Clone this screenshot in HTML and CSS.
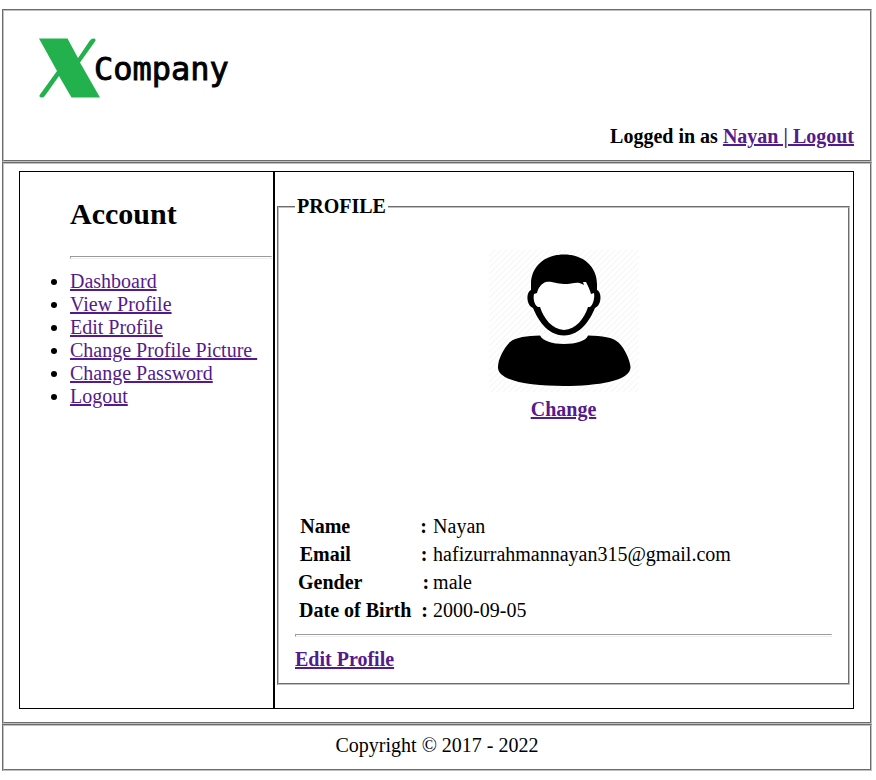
FILE: index.html
```
<!DOCTYPE html>
<html lang="en">
<head>
<meta charset="utf-8">
<title>Profile - XCompany</title>
<link rel="stylesheet" href="styles.css">
</head>
<body>
<header class="box header">
  <svg class="logo" width="200" height="68" viewBox="0 0 200 68" role="img" aria-label="XCompany">
    <path class="logo-mark" d="M0 4.500H28.500L39 24L50.500 7Q52 4.500 54 4.500H55Q57.500 5 56 7.500L41 28.500L61 63.500H32.500L20 42L6.500 61Q5 63.500 3 63.500H2Q-0.500 63 1 60.500L18 37Z"/>
    <text class="logo-text" x="55" y="46">Company</text>
  </svg>
  <p class="session">Logged in as <a href="#">Nayan | Logout</a></p>
</header>

<main class="box main">
  <nav class="panel sidebar">
    <h2>Account</h2>
    <hr>
    <ul>
      <li><a href="#">Dashboard</a></li>
      <li><a href="#">View Profile</a></li>
      <li><a href="#">Edit Profile</a></li>
      <li><a href="#">Change Profile Picture&nbsp;</a></li>
      <li><a href="#">Change Password</a></li>
      <li><a href="#">Logout</a></li>
    </ul>
  </nav>
  <section class="panel content">
    <fieldset>
      <legend>PROFILE</legend>
      <div class="picture">
        <svg width="150" height="142" viewBox="0 0 150 142" role="img" aria-label="Profile picture">
          <defs>
            <pattern id="stripes" width="6" height="6" patternUnits="userSpaceOnUse">
              <path d="M-1 1L1 -1M0 6L6 0M5 7L7 5" stroke="#f6f6f6" stroke-width="1.200"/>
            </pattern>
          </defs>
          <rect width="150" height="142" fill="url(#stripes)"/>
          <path d="M75 4.500C55 4.500 42 17 42 34V40C37 42 37 55 44 58C49 70 58 85 75 85.500C92 85 101 70 106 58C113 55 113 42 108 40V34C108 17 95 4.500 75 4.500Z"/>
          <path class="face" d="M48 43C49 38 53 33 57 32C63 31 67 34 75 34C83 34 88 31 93 34L95 35L94 32L97 32C99 36 101 40 102 44L105 43C106 48 104 55 101 57H99C95 69 87 79 75 80C63 79 55 69 51 57H49C45 55 44 48 45 44Z"/>
          <path d="M51 85.500C54 91 63 94 75 94C87 94 97 91 99 85.500C113 86 124 87 130 93C136 99 141 110 141.500 117C142 131 109 136 75 136C41 136 8 131 9 117C9 109 15 98 21 92C27 87 38 86 51 85.500Z"/>
        </svg>
        <a class="strong" href="#">Change</a>
      </div>
      <table>
        <tr><th scope="row">Name&nbsp;&nbsp;&nbsp;&nbsp;&nbsp;&nbsp;&nbsp;&nbsp;&nbsp;&nbsp;&nbsp;&nbsp;&nbsp;&nbsp;:</th><td>Nayan</td></tr>
        <tr><th scope="row">Email&nbsp;&nbsp;&nbsp;&nbsp;&nbsp;&nbsp;&nbsp;&nbsp;&nbsp;&nbsp;&nbsp;&nbsp;&nbsp;&nbsp;:</th><td>hafizurrahmannayan315@gmail.com</td></tr>
        <tr><th scope="row">Gender&nbsp;&nbsp;&nbsp;&nbsp;&nbsp;&nbsp;&nbsp;&nbsp;&nbsp;&nbsp;&nbsp;&nbsp;:</th><td>male</td></tr>
        <tr><th scope="row">Date of Birth&nbsp;&nbsp;:</th><td>2000-09-05</td></tr>
      </table>
      <hr>
      <a class="strong" href="#">Edit Profile</a>
    </fieldset>
  </section>
</main>

<footer class="box footer">Copyright © 2017 - 2022</footer>
</body>
</html>
```
FILE: styles.css
```
body {
  margin: 9px 4px 9px 2px;
  background: #fff;
  color: #000;
  font-family: "Liberation Serif", "Times New Roman", serif;
  font-size: 20px;
  line-height: 23px;
}

a {
  color: #551a8b;
  text-decoration-thickness: 2px;
}

.strong {
  font-weight: bold;
}

.box,
fieldset {
  border: 2px groove rgb(192, 192, 192);
}

hr {
  height: 1px;
  margin: 8px 0 11px;
  border: 1px solid;
  border-color: #9a9a9a #eee #eee #9a9a9a;
}

.header {
  padding: 23px 16px 12px 35px;
}

.logo {
  display: block;
}

.logo-mark {
  fill: #22b14c;
}

.logo-text {
  font-family: "DejaVu Sans Mono", monospace;
  font-size: 32px;
  stroke: #000;
  stroke-width: 0.9px;
}

.session {
  margin: 23px 0 0;
  font-weight: bold;
  text-align: right;
}

.main {
  display: grid;
  grid-template-columns: 255px 1fr;
  padding: 7px 16px 13px 15px;
}

.panel {
  border: 1px solid #000;
}

.sidebar {
  padding: 24px 1px 0 50px;
}

h2 {
  margin: 0 0 25px;
  font-size: 30px;
  line-height: 35px;
}

ul {
  margin: 0;
  padding: 0;
}

.content {
  padding: 23px 3px 23px 2px;
}

fieldset {
  margin: 0;
  padding: 32px 16px 12px;
}

legend {
  padding: 0 2px;
  font-weight: bold;
}

.picture {
  display: flex;
  flex-direction: column;
  align-items: center;
  gap: 6px;
  margin-bottom: 90px;
}

.face {
  fill: #fff;
}

table {
  border-spacing: 2px 3px;
}

th,
td {
  padding: 1px;
}

.footer {
  padding: 8px 0 12px;
  text-align: center;
}
```
